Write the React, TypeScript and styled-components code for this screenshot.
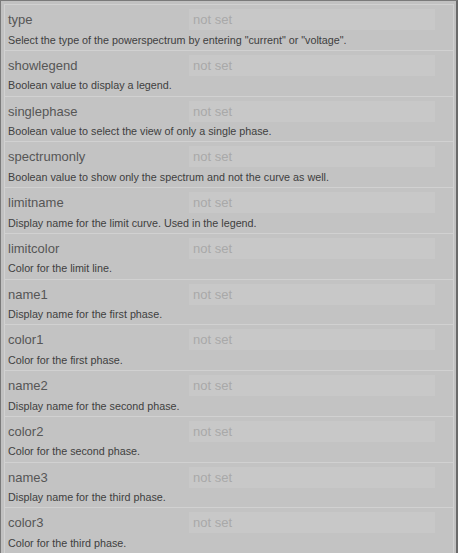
import React from "react";
import styled, { createGlobalStyle } from "styled-components";

const Global = createGlobalStyle`
  html, body { margin: 0; padding: 0; background: #c1c1c1; }
  body { font-family: "Liberation Sans", Arial, sans-serif; }
`;

const Frame = styled.div`
  box-sizing: border-box;
  width: 458px;
  height: 553px;
  overflow: hidden;
  background: #c1c1c1;
  border-top: 1px solid #7a7a7a;
  border-left: 1px solid #7a7a7a;
  border-right: 2px solid #6a6a6a;
  padding: 3px 2px 0 3px;
`;

const List = styled.div`
  display: flex;
  flex-direction: column;
`;

const Item = styled.div`
  box-sizing: border-box;
  height: 45.75px;
  flex-shrink: 0;
  border-top: 1px solid #d1d1d1;
  border-left: 1px solid #d1d1d1;
  border-right: 1px solid #d1d1d1;
  background: #c3c3c3;
  padding: 4px 18px 0 3px;
  display: flex;
  flex-direction: column;
`;

const Row = styled.div`
  display: flex;
  align-items: center;
  height: 21px;
`;

const Label = styled.div`
  width: 181px;
  font-size: 13px;
  color: #565656;
`;

const Input = styled.input`
  box-sizing: border-box;
  flex: 1;
  min-width: 0;
  height: 21px;
  border: none;
  outline: none;
  background: #c8c8c8;
  padding: 0 4px;
  font-family: "Liberation Sans", Arial, sans-serif;
  font-size: 13px;
  color: #555;
  &::placeholder { color: #a9a9a9; }
`;

const Desc = styled.div`
  margin-top: 3.5px;
  font-size: 10.75px;
  color: #404040;
`;

const items: [string, string][] = [
  ["type", 'Select the type of the powerspectrum by entering "current" or "voltage".'],
  ["showlegend", "Boolean value to display a legend."],
  ["singlephase", "Boolean value to select the view of only a single phase."],
  ["spectrumonly", "Boolean value to show only the spectrum and not the curve as well."],
  ["limitname", "Display name for the limit curve. Used in the legend."],
  ["limitcolor", "Color for the limit line."],
  ["name1", "Display name for the first phase."],
  ["color1", "Color for the first phase."],
  ["name2", "Display name for the second phase."],
  ["color2", "Color for the second phase."],
  ["name3", "Display name for the third phase."],
  ["color3", "Color for the third phase."],
];

export default function App() {
  return (
    <>
      <Global />
      <Frame>
        <List>
          {items.map(([name, desc]) => (
            <Item key={name}>
              <Row>
                <Label>{name}</Label>
                <Input placeholder="not set" />
              </Row>
              <Desc>{desc}</Desc>
            </Item>
          ))}
        </List>
      </Frame>
    </>
  );
}
